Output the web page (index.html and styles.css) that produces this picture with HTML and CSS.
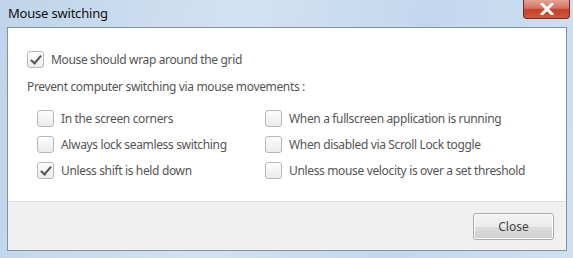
FILE: index.html
```html
<!DOCTYPE html>
<html lang="en">
<head>
  <meta charset="UTF-8">
  <title>Mouse switching</title>
  <link rel="stylesheet" href="styles.css">
</head>
<body>
  <div class="window">
    <div class="titlebar">
      <span class="title">Mouse switching</span>
      <button class="close-x" aria-label="Close">
        <svg width="14" height="12" viewBox="0 0 14 12"><path d="M2 1 L12 11 M12 1 L2 11" stroke="#fff" stroke-width="3" stroke-linecap="square"/></svg>
      </button>
    </div>
    <div class="client">
      <div class="content">
        <label class="option"><span class="box checked"></span>Mouse should wrap around the grid</label>
        <p class="heading">Prevent computer switching via mouse movements :</p>
        <div class="grid">
          <label class="option"><span class="box"></span>In the screen corners</label>
          <label class="option"><span class="box"></span>When a fullscreen application is running</label>
          <label class="option"><span class="box"></span>Always lock seamless switching</label>
          <label class="option"><span class="box"></span>When disabled via Scroll Lock toggle</label>
          <label class="option"><span class="box checked"></span>Unless shift is held down</label>
          <label class="option"><span class="box"></span>Unless mouse velocity is over a set threshold</label>
        </div>
      </div>
      <div class="footer">
        <button class="button">Close</button>
      </div>
    </div>
  </div>
</body>
</html>
```
FILE: styles.css
```css
html, body {
  margin: 0;
  padding: 0;
}
body {
  width: 573px;
  height: 258px;
  overflow: hidden;
  font-family: "Noto Sans", "Open Sans", sans-serif;
}
.window {
  width: 573px;
  height: 258px;
  box-sizing: border-box;
  background: linear-gradient(100deg, #bfd4ea 0%, #d3e2f2 40%, #c2d7ee 70%, #cfe0f3 100%);
  padding: 0 6px 7px 7px;
  display: flex;
  flex-direction: column;
}
.titlebar {
  height: 27px;
  display: flex;
  justify-content: space-between;
  align-items: flex-start;
}
.title {
  font-size: 13px;
  letter-spacing: -0.2px;
  color: #111;
  margin-top: 4px;
  margin-left: 1px;
}
.close-x {
  width: 47px;
  height: 19px;
  margin-right: -3px;
  border: 1px solid #7a2a20;
  border-top: none;
  border-radius: 0 0 4px 4px;
  background: linear-gradient(#e3a294 0%, #d5735f 45%, #c3402b 55%, #cf5a3f 100%);
  display: flex;
  align-items: center;
  justify-content: center;
  padding: 0;
}
.client {
  flex: 1;
  border: 1px solid #7f93ab;
  display: flex;
  flex-direction: column;
  background: #fff;
}
.content {
  flex: 1;
  padding: 23px 0 0 19px;
  color: #555;
  font-size: 12px;
  letter-spacing: -0.35px;
}
.option {
  display: flex;
  align-items: center;
  height: 17px;
}
.box {
  width: 15px;
  height: 15px;
  border: 1px solid #b8b8b8;
  border-radius: 3px;
  background: linear-gradient(#fdfdfd, #ebebeb);
  margin-right: 7px;
  flex-shrink: 0;
  position: relative;
}
.box.checked::after {
  content: "";
  position: absolute;
  left: 5px;
  top: 1px;
  width: 4px;
  height: 9px;
  border: solid #555;
  border-width: 0 2px 2px 0;
  transform: rotate(40deg);
}
.heading {
  margin: 10px 0 0;
  height: 17px;
  line-height: 17px;
}
.grid {
  display: grid;
  grid-template-columns: 228px auto;
  row-gap: 9px;
  margin: 15px 0 0 10px;
}
.footer {
  height: 49px;
  background: #f0f0f0;
  border-top: 1px solid #dfdfdf;
  display: flex;
  justify-content: flex-end;
  align-items: flex-start;
  padding: 11px 12px 0 0;
  box-sizing: border-box;
}
.button {
  width: 81px;
  height: 27px;
  border: 1px solid #acacac;
  border-radius: 3px;
  background: linear-gradient(#f3f3f3 0%, #ebebeb 50%, #dddddd 51%, #cfcfcf 100%);
  font-family: "Noto Sans", "Open Sans", sans-serif;
  font-size: 12px;
  color: #444;
  box-shadow: inset 0 0 0 1px #fcfcfc;
}
```
